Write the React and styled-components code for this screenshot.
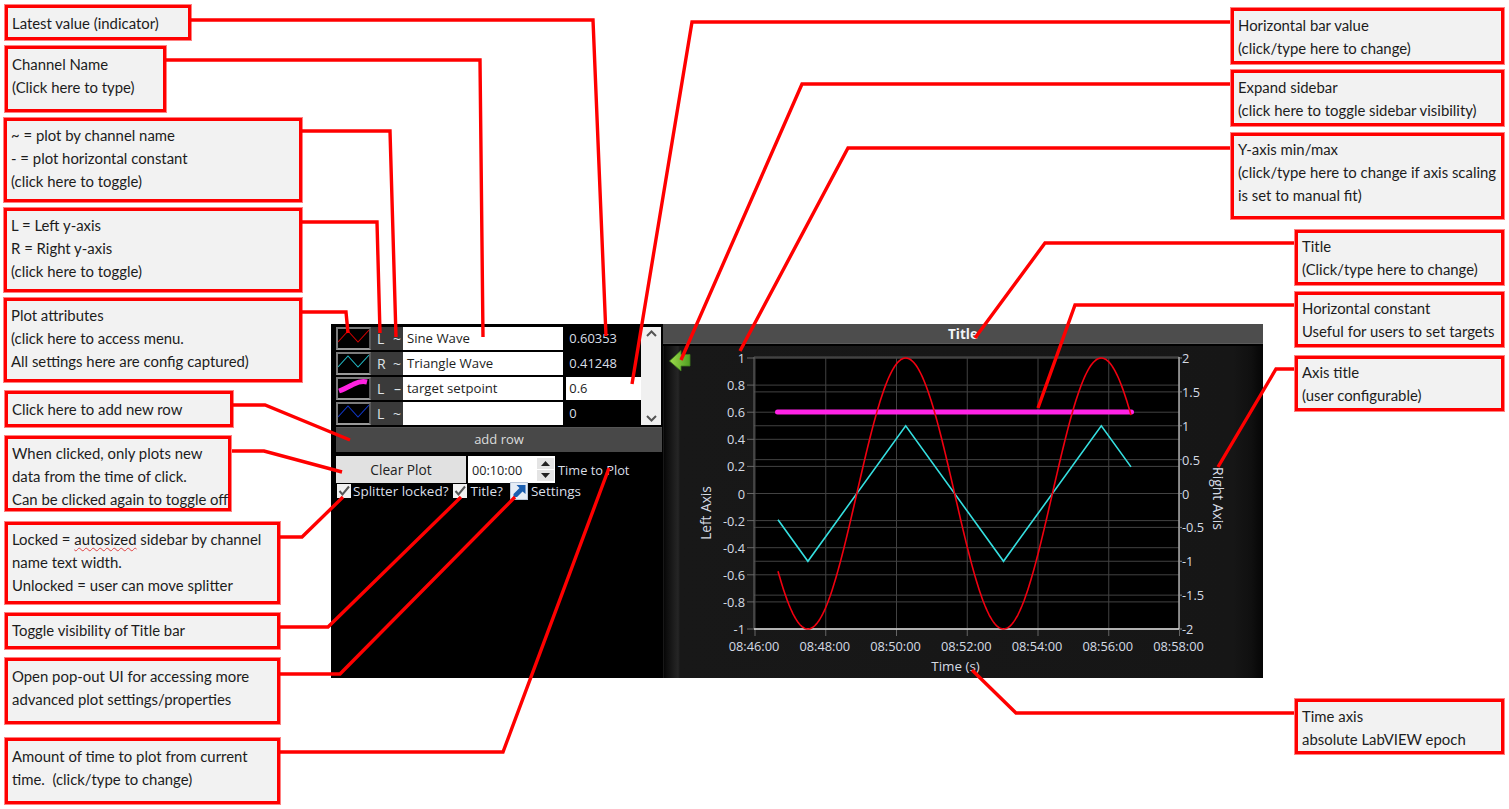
import React from 'react';
import styled, { createGlobalStyle } from 'styled-components';

const GlobalStyle = createGlobalStyle`
    html, body { margin: 0; padding: 0; background: #fff; }
    body { font-family: "Lato", "Liberation Sans", sans-serif; overflow: hidden; }
`
const Canvas = styled.div`
    position: relative;
    width: 1509px;
    height: 809px;
    background: #fff;
    overflow: hidden;
`
const Note = styled.div`
    position: absolute;
    left: ${(p) => p.$x}px;
    top: ${(p) => p.$y}px;
    width: ${(p) => p.$w}px;
    height: ${(p) => p.$h}px;
    box-sizing: border-box;
    border: 4px solid #f00;
    outline: 1px solid #ff8080;
    outline-offset: -1px;
    background: #f2f2f2;
    padding: ${(p) => p.$pt ?? 4}px 2px 0 4px;
    font-family: "Lato", "Liberation Sans", sans-serif;
    font-size: 14.9px;
    line-height: 23px;
    color: #1c1c1c;
    white-space: pre;
`
const Squiggle = styled.span`
    text-decoration: underline wavy #e04040 1px;
    text-underline-offset: 2px;
`
const Leaders = styled.svg`
    position: absolute;
    inset: 0;
    pointer-events: none;
    z-index: 2;
`
const Panel = styled.div`
    position: absolute;
    left: 331px;
    top: 324px;
    width: 932px;
    height: 354px;
    display: flex;
    background: #000;
    font-family: "Open Sans", "Liberation Sans", sans-serif;
    font-size: 13px;
    color: #d9dee6;
`
const Sidebar = styled.div`
    width: 331px;
    box-sizing: border-box;
    padding: 3px 0 0 5px;
    display: flex;
    flex-direction: column;
`
const TableArea = styled.div`
    display: flex;
    height: 98px;
`
const Rows = styled.div`
    width: 305px;
    display: flex;
    flex-direction: column;
    gap: 2px;
`
const Row = styled.div`
    display: flex;
    height: 23px;
`
const Swatch = styled.div`
    width: 35px;
    height: 23px;
    box-sizing: border-box;
    border: 2px solid #7c7c7c;
    border-right-color: #5a5a5a;
    border-bottom-color: #9a9a9a;
    background: #000;
    svg { display: block; }
`
const Toggles = styled.div`
    width: 32px;
    display: flex;
    justify-content: space-between;
    align-items: center;
    box-sizing: border-box;
    padding: 0 2px 0 6px;
    background: #3a3a3a;
    font-size: 14px;
    color: #dfe3e8;
`
const NameField = styled.div`
    width: 161px;
    box-sizing: border-box;
    padding-left: 4px;
    background: #fff;
    color: #1d1d1d;
    font-size: 13.2px;
    line-height: 22px;
`
const ValueField = styled.div`
    width: 75px;
    margin-left: 3px;
    box-sizing: border-box;
    padding-left: 3px;
    background: ${(p) => (p.$editable ? '#fff' : '#000')};
    color: ${(p) => (p.$editable ? '#1d1d1d' : '#d9dee6')};
    font-size: 12.9px;
    line-height: 22px;
`
const Scrollbar = styled.div`
    width: 20px;
    display: flex;
    flex-direction: column;
    justify-content: space-between;
    align-items: center;
    padding: 3px 0 3px;
    box-sizing: border-box;
    background: #f0f0f0;
    color: #555;
`
const AddRow = styled.div`
    width: 326px;
    height: 25px;
    margin-top: 2px;
    background: #484848;
    border-top: 1px solid #555;
    box-sizing: border-box;
    text-align: center;
    line-height: 23px;
    font-size: 13px;
    color: #dcdcdc;
`
const Controls = styled.div`
    display: flex;
    align-items: center;
    gap: 2px;
    height: 27px;
    margin-top: 4px;
`
const ClearButton = styled.div`
    width: 130px;
    height: 27px;
    background: #e1e1e1;
    color: #222;
    text-align: center;
    line-height: 27px;
    font-size: 13.7px;
`
const TimeField = styled.div`
    width: 87px;
    height: 27px;
    display: flex;
    align-items: center;
    justify-content: space-between;
    box-sizing: border-box;
    padding: 0 1px 0 4px;
    background: #fff;
    color: #1d1d1d;
    font-size: 12.7px;
`
const Spinner = styled.div`
    width: 17px;
    height: 23px;
    display: flex;
    flex-direction: column;
    justify-content: space-between;
`
const SpinButton = styled.div`
    height: 11px;
    background: #e4e4e4;
    display: flex;
    align-items: center;
    justify-content: center;
`
const Label = styled.span`
    margin-left: ${(p) => p.$ml ?? 0}px;
    font-size: ${(p) => p.$size ?? 12.8}px;
    white-space: nowrap;
`
const Options = styled.div`
    display: flex;
    align-items: center;
    height: 18px;
    margin: 0 0 0 1px;
    position: relative;
    top: -1px;
`
const CheckBox = styled.div`
    width: 14px;
    height: 14px;
    background: #f1f1f1;
    margin-left: ${(p) => p.$ml ?? 0}px;
    svg { display: block; }
`
const SettingsIcon = styled.div`
    width: 18px;
    height: 18px;
    margin-left: 7px;
    box-sizing: border-box;
    border: 1px solid #b9c6d8;
    background: #e6edf6;
    svg { display: block; }
`
const ChartPanel = styled.div`
    flex: 1;
    margin-left: 1px;
    display: flex;
    flex-direction: column;
`
const TitleBar = styled.div`
    height: 19px;
    background: #4d4d4d;
    border-bottom: 1px solid #5c5c5c;
    text-align: center;
    font-weight: 700;
    font-size: 13.5px;
    line-height: 21px;
    color: #f2f4f7;
`
const ChartBody = styled.div`
    flex: 1;
    background: linear-gradient(90deg, #2a2a2a 0, #060606 1px, #0c0c0c 3px, #262626 15px, #181818 17px, #161616 95%, #101010 98%, #050505 100%);
    box-shadow: inset 0 2px 0 #000;
    svg { display: block; }
`

const boxes = [
    { x: 4, y: 4, w: 188, h: 37, lines: ['Latest value (indicator)'] },
    { x: 4, y: 45, w: 163, h: 68, lines: ['Channel Name', '(Click here to type)'] },
    { x: 3, y: 117, w: 300, h: 86, pt: 3, lines: ['~ = plot by channel name', '- = plot horizontal constant', '(click here to toggle)'] },
    { x: 3, y: 207, w: 300, h: 86, pt: 3, lines: ['L = Left y-axis', 'R = Right y-axis', '(click here to toggle)'] },
    { x: 3, y: 297, w: 300, h: 86, pt: 3, lines: ['Plot attributes', '(click here to access menu.', 'All settings here are config captured)'] },
    { x: 4, y: 390, w: 230, h: 38, pt: 4, lines: ['Click here to add new row'] },
    { x: 4, y: 435, w: 228, h: 77, pt: 3, lines: ['When clicked, only plots new', 'data from the time of click.', 'Can be clicked again to toggle off'] },
    { x: 4, y: 521, w: 277, h: 84, pt: 3, lines: [<>Locked = <Squiggle>autosized</Squiggle> sidebar by channel</>, 'name text width.', 'Unlocked = user can move splitter'] },
    { x: 4, y: 612, w: 277, h: 38, pt: 3, lines: ['Toggle visibility of Title bar'] },
    { x: 4, y: 657, w: 277, h: 68, pt: 4, lines: ['Open pop-out UI for accessing more', 'advanced plot settings/properties'] },
    { x: 4, y: 737, w: 277, h: 68, pt: 4, lines: ['Amount of time to plot from current', 'time.  (click/type to change)'] },
    { x: 1230, y: 7, w: 275, h: 58, pt: 3, lines: ['Horizontal bar value', '(click/type here to change)'] },
    { x: 1230, y: 69, w: 275, h: 58, pt: 3, lines: ['Expand sidebar', '(click here to toggle sidebar visibility)'] },
    { x: 1230, y: 132, w: 275, h: 88, pt: 2, lines: ['Y-axis min/max', '(click/type here to change if axis scaling', 'is set to manual fit)'] },
    { x: 1294, y: 229, w: 211, h: 57, pt: 2, lines: ['Title', '(Click/type here to change)'] },
    { x: 1294, y: 291, w: 211, h: 57, pt: 2, lines: ['Horizontal constant', 'Useful for users to set targets'] },
    { x: 1294, y: 355, w: 211, h: 57, pt: 2, lines: ['Axis title', '(user configurable)'] },
    { x: 1294, y: 698, w: 211, h: 57, pt: 3, lines: ['Time axis', 'absolute LabVIEW epoch'] },
];

const leaderLines = [
    '191,20 593,20 606,336',
    '166,60 480,60 483,337',
    '302,131 390,131 396,337',
    '302,222 377,222 380,333',
    '302,312 346,312 348,333',
    '233,405 265,405 350,440',
    '232,451 264,451 342,472',
    '280,537 302,537 343,497',
    '280,627 328,627 461,497',
    '280,674 340,674 515,497',
    '280,752 503,752 609,468',
    '1230,22 692,22 632,384',
    '1230,84 802,84 681,360',
    '1230,148 848,148 740,351',
    '1294,243 1045,243 975,338',
    '1294,305 1075,305 1038,408',
    '1294,369 1276,369 1218,467',
    '1294,713 1016,713 972,670',
];

const channels = [
    { name: 'Sine Wave', axis: 'L', mode: '~', value: '0.60353', color: '#d00000' },
    { name: 'Triangle Wave', axis: 'R', mode: '~', value: '0.41248', color: '#22b8c4' },
    { name: 'target setpoint', axis: 'L', mode: '–', value: '0.6', color: '#ff22e0', thick: true, editable: true },
    { name: '', axis: 'L', mode: '~', value: '0', color: '#1038c8' },
];

const leftTicks = ['1', '0.8', '0.6', '0.4', '0.2', '0', '-0.2', '-0.4', '-0.6', '-0.8', '-1'];
const rightTicks = ['2', '1.5', '1', '0.5', '0', '-0.5', '-1', '-1.5', '-2'];
const timeTicks = ['08:46:00', '08:48:00', '08:50:00', '08:52:00', '08:54:00', '08:56:00', '08:58:00'];

const plotLeft = 754;
const plotRight = 1179;
const plotTop = 358;
const plotBottom = 629;
const midY = (plotTop + plotBottom) / 2;
const halfY = (plotBottom - plotTop) / 2;
const leftY = (i) => plotTop + (i * (plotBottom - plotTop)) / 10;
const rightY = (i) => plotTop + (i * (plotBottom - plotTop)) / 8;
const timeX = (i) => 755 + i * 70.75;

const peakX = 905.7;
const period = 195.6;

const sinePoints = () => {
    const pts = [];
    for (let x = 778; x <= 1131; x += 1) {
        const y = midY - halfY * Math.cos((2 * Math.PI * (x - peakX)) / period);
        pts.push(`${x},${y.toFixed(1)}`);
    }
    return pts.join(' ');
};

const triangleAt = (x) => {
    const phase = (((x - peakX) / period) % 1 + 1) % 1;
    const v = phase < 0.5 ? 1 - 4 * phase : 4 * phase - 3;
    return (midY - (v * halfY) / 2).toFixed(1);
};
const trianglePoints = [778, peakX - period / 2, peakX, peakX + period / 2, peakX + period, 1131]
    .map((x) => `${x},${triangleAt(x)}`)
    .join(' ');

// viewBox is in page coordinates, it makes the chart easier to check against the picture
const Chart = () => (
    <svg width="600" height="334" viewBox="663 344 600 334" fontFamily='"Open Sans", "Liberation Sans", sans-serif' fontSize="12.8" fill="#d5dbe4">
        <defs>
            <linearGradient id="arrowGreen" x1="0" y1="0" x2="1" y2="0">
                <stop offset="0" stopColor="#9fdc4c" />
                <stop offset="1" stopColor="#4f9e22" />
            </linearGradient>
        </defs>
        <polygon points="669.5,361 681,350.5 681,354.5 690,354.5 690,366 681,366 681,371" fill="url(#arrowGreen)" stroke="#3f7f1c" strokeWidth="0.8" strokeLinejoin="round" />

        <rect x={plotLeft} y={plotTop - 1} width={plotRight - plotLeft} height={plotBottom - plotTop + 1} fill="#000" />
        {leftTicks.map((t, i) => (
            <g key={t}>
                <line x1={plotLeft} x2={plotRight} y1={leftY(i)} y2={leftY(i)} stroke="#424242" />
                <line x1={plotLeft - 7} x2={plotLeft} y1={leftY(i)} y2={leftY(i)} stroke="#666" />
                <text x={plotLeft - 9} y={leftY(i) + 5} textAnchor="end">{t}</text>
            </g>
        ))}
        {rightTicks.map((t, i) => (
            <g key={t}>
                <line x1={plotLeft} x2={plotRight} y1={rightY(i)} y2={rightY(i)} stroke="#424242" />
                <line x1={plotRight} x2={plotRight + 3} y1={rightY(i)} y2={rightY(i)} stroke="#888" />
                <text x={plotRight + 3} y={rightY(i) + 5}>{t}</text>
            </g>
        ))}
        {timeTicks.map((t, i) => (
            <g key={t}>
                <line x1={timeX(i)} x2={timeX(i)} y1={plotTop} y2={plotBottom} stroke="#424242" />
                <line x1={timeX(i)} x2={timeX(i)} y1={plotBottom} y2={plotBottom + 7} stroke="#666" />
                <text x={timeX(i) - 1} y={651} textAnchor="middle">{t}</text>
            </g>
        ))}
        <line x1={plotLeft} x2={plotLeft} y1={plotTop - 1} y2={plotBottom} stroke="#6a6a6a" />
        <line x1={plotLeft} x2={plotRight} y1={plotTop - 1} y2={plotTop - 1} stroke="#555" />
        <line x1={plotRight} x2={plotRight} y1={plotTop - 1} y2={plotBottom} stroke="#aaa" strokeWidth="1.5" />
        <line x1={plotLeft} x2={plotRight} y1={plotBottom} y2={plotBottom} stroke="#ddd" strokeWidth="1.5" />

        <line x1="777.5" x2="1131.5" y1="412" y2="412" stroke="#ff22e6" strokeWidth="5" strokeLinecap="round" />
        <polyline points={trianglePoints} fill="none" stroke="#35dfe0" strokeWidth="1.6" />
        <polyline points={sinePoints()} fill="none" stroke="#f00010" strokeWidth="1.6" />

        <text transform="translate(711 513) rotate(-90)" textAnchor="middle" fontSize="13.7">Left Axis</text>
        <text transform="translate(1213 498.5) rotate(90)" textAnchor="middle" fontSize="13.9">Right Axis</text>
        <text x="955.5" y="671" textAnchor="middle" fontSize="13.4">Time (s)</text>
    </svg>
);

const SwatchLine = ({ color, thick }) => (
    <svg width="31" height="19" viewBox="2 2 31 19">
        {thick
            ? <path d="M3 14 C9 12 14 9 18 7 C22 5 27 4 31 5" fill="none" stroke={color} strokeWidth="5" />
            : <polyline points="2,15 12,4 22,15 33,3" fill="none" stroke={color} strokeWidth="1.1" />}
    </svg>
);

const Chevron = ({ up }) => (
    <svg width="11" height="7" viewBox="0 0 11 7">
        <polyline points={up ? '1,6 5.5,1.5 10,6' : '1,1 5.5,5.5 10,1'} fill="none" stroke="currentColor" strokeWidth="2" />
    </svg>
);

const SpinArrow = ({ up }) => (
    <svg width="9" height="5" viewBox="0 0 9 5">
        <polygon points={up ? '4.5,0 9,5 0,5' : '0,0 9,0 4.5,5'} fill="#222" />
    </svg>
);

const Check = () => (
    <svg width="14" height="14" viewBox="0 0 14 14">
        <polyline points="2.5,7 5.5,10.5 12,2.5" fill="none" stroke="#555" strokeWidth="2" />
    </svg>
);

const ShortcutIcon = () => (
    <svg width="16" height="16" viewBox="0 0 16 16">
        <polygon points="5.5,2 14.5,2 14.5,11 11.5,8.5 6,14 2.5,14 2.5,11 8.5,5" fill="#1b5fb0" />
    </svg>
);

const App = () => (
    <Canvas>
        <GlobalStyle />
        {boxes.map((b, i) => (
            <Note key={i} $x={b.x} $y={b.y} $w={b.w} $h={b.h} $pt={b.pt}>
                {b.lines.map((line, j) => <div key={j}>{line}</div>)}
            </Note>
        ))}
        <Panel>
            <Sidebar>
                <TableArea>
                    <Rows>
                        {channels.map((c) => (
                            <Row key={c.name + c.value}>
                                <Swatch><SwatchLine color={c.color} thick={c.thick} /></Swatch>
                                <Toggles><span>{c.axis}</span><span>{c.mode}</span></Toggles>
                                <NameField>{c.name}</NameField>
                                <ValueField $editable={c.editable}>{c.value}</ValueField>
                            </Row>
                        ))}
                    </Rows>
                    <Scrollbar><Chevron up /><Chevron /></Scrollbar>
                </TableArea>
                <AddRow>add row</AddRow>
                <Controls>
                    <ClearButton>Clear Plot</ClearButton>
                    <TimeField>
                        00:10:00
                        <Spinner>
                            <SpinButton><SpinArrow up /></SpinButton>
                            <SpinButton><SpinArrow /></SpinButton>
                        </Spinner>
                    </TimeField>
                    <Label $ml={1}>Time to Plot</Label>
                </Controls>
                <Options>
                    <CheckBox><Check /></CheckBox>
                    <Label $ml={2} $size={13.5}>Splitter locked?</Label>
                    <CheckBox $ml={5}><Check /></CheckBox>
                    <Label $ml={3} $size={13.5}>Title?</Label>
                    <SettingsIcon><ShortcutIcon /></SettingsIcon>
                    <Label $ml={3} $size={13.5}>Settings</Label>
                </Options>
            </Sidebar>
            <ChartPanel>
                <TitleBar>Title</TitleBar>
                <ChartBody><Chart /></ChartBody>
            </ChartPanel>
        </Panel>
        <Leaders width="1509" height="809" viewBox="0 0 1509 809">
            {leaderLines.map((points) => (
                <polyline key={points} points={points} fill="none" stroke="#f00" strokeWidth="3.4" />
            ))}
        </Leaders>
    </Canvas>
);

export default App;
